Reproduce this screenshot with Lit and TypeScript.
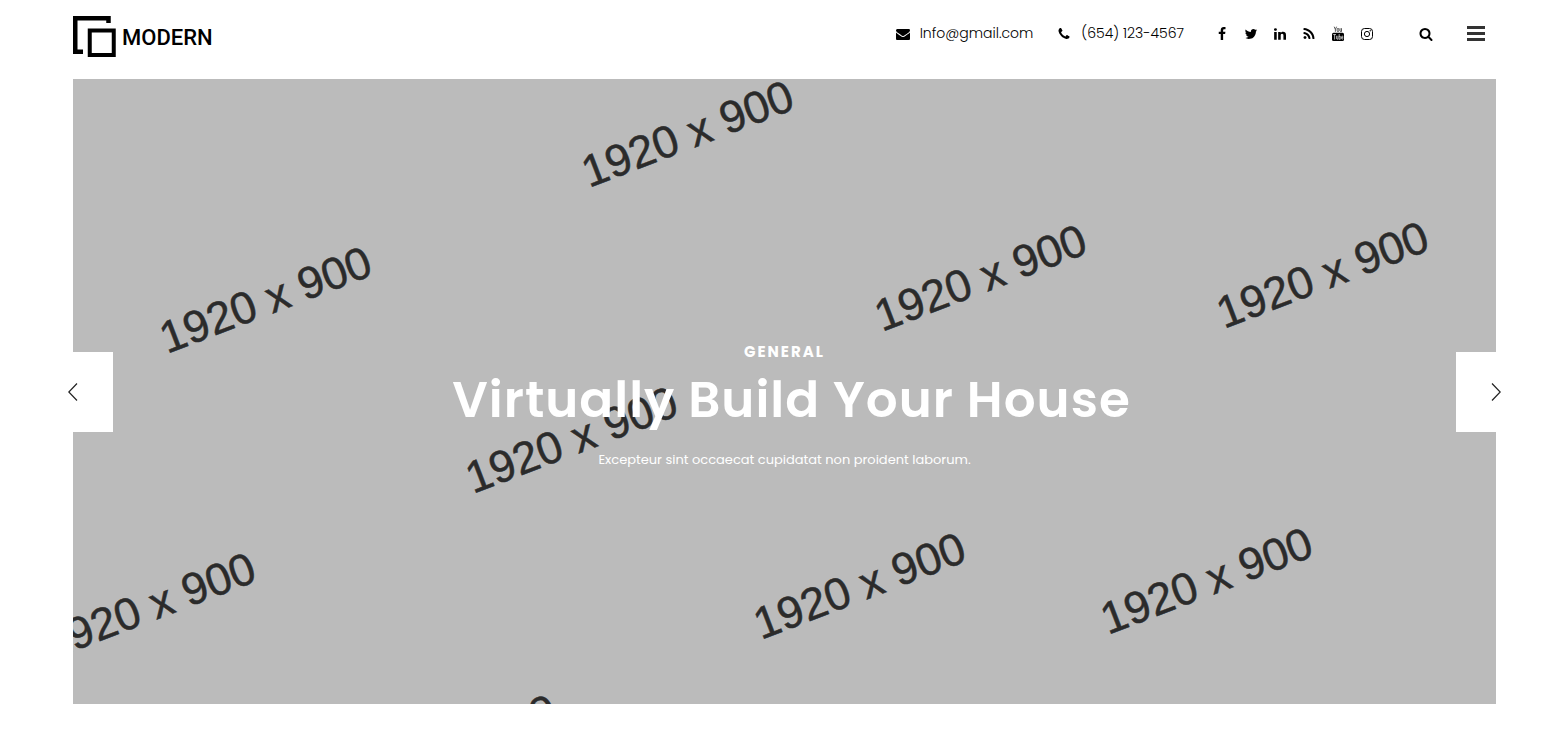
import { LitElement, html, css, svg } from "lit";
import { customElement } from "lit/decorators.js";

const ICONS = {
  envelope:
    "M1792 710v794q0 66-47 113t-113 47h-1472q-66 0-113-47t-47-113v-794q44 49 101 87 362 246 497 345 57 42 92.5 65.5t94.5 48 110 24.5h2q51 0 110-24.5t94.5-48 92.5-65.5q170-123 498-345 57-39 100-87zm0-294q0 79-49 151t-122 123q-376 261-468 325-10 7-42.5 31t-54 38.5-52 32.5-57.5 27-50 9h-2q-23 0-50-9t-57.5-27-52-32.5-54-38.5-42.5-31q-91-64-262-182.5t-205-142.5q-62-42-117-115.5t-55-136.5q0-78 41.5-130t118.5-52h1472q65 0 112.5 47t47.5 113z",
  phone:
    "M1600 1240q0 27-10 70.5t-21 68.5q-21 50-122 106-94 51-186 51-27 0-53-3.5t-57.5-12.5-47-14.5-55.5-20.5-49-18q-98-35-175-83-127-79-264-216t-216-264q-48-77-83-175-3-9-18-49t-20.5-55.5-14.5-47-12.5-57.5-3.5-53q0-92 51-186 56-101 106-122 25-11 68.5-21t70.5-10q14 0 21 3 18 6 53 76 11 19 30 54t35 63.5 31 53.5q3 4 17.5 25t21.5 35.5 7 28.5q0 20-28.5 50t-62 55-62 53-28.5 46q0 9 5 22.5t8.5 20.5 14 24 11.5 19q76 137 174 235t235 174q2 1 19 11.5t24 14 20.5 8.5 22.5 5q18 0 46-28.5t53-62 55-62 50-28.5q14 0 28.5 7t35.5 21.5 25 17.5q25 15 53.5 31t63.5 35 54 30q70 35 76 53 3 7 3 21z",
  facebook:
    "M1343 12v264h-157q-86 0-116 36t-30 108v189h293l-39 296h-254v759h-306v-759h-255v-296h255v-218q0-186 104-288.5t277-102.5q147 0 228 12z",
  twitter:
    "M1684 408q-67 98-162 167 1 14 1 42 0 130-38 259.5t-115.5 248.5-184.5 210.5-258 146-323 54.5q-271 0-496-145 35 4 78 4 225 0 401-138-105-2-188-64.5t-114-159.5q33 5 61 5 43 0 85-11-112-23-185.5-111.5t-73.5-205.5v-4q68 38 146 41-66-44-105-115t-39-154q0-88 44-163 121 149 294.5 238.5t371.5 99.5q-8-38-8-74 0-134 94.5-228.5t228.5-94.5q140 0 236 102 109-21 205-78-37 115-142 178 93-10 186-50z",
  linkedin:
    "M477 625v991h-330v-991h330zm21-306q1 73-50.5 122t-135.5 49h-2q-82 0-132-49t-50-122q0-74 51.5-122.5t134.5-48.5 133 48.5 51 122.5zm1166 729v568h-329v-530q0-105-40.5-164.5t-126.5-59.5q-63 0-105.5 34.5t-63.5 85.5q-11 30-11 81v553h-329q2-399 2-647t-1-296l-1-48h329v144h-2q20-32 41-56t56.5-52 87-43.5 114.5-15.5q171 0 275 113.5t104 332.5z",
  rss:
    "M576 1344q0 80-56 136t-136 56-136-56-56-136 56-136 136-56 136 56 56 136zm512 123q2 28-17 48-18 21-47 21h-135q-25 0-43-16.5t-20-41.5q-22-229-184.5-391.5t-391.5-184.5q-25-2-41.5-20t-16.5-43v-135q0-29 21-47 17-17 43-17h5q160 13 306 80.5t259 181.5q114 113 181.5 259t80.5 306zm512 2q2 27-18 47-18 20-46 20h-143q-26 0-44.5-17.5t-19.5-42.5q-12-215-101-408.5t-231.5-336-336-231.5-408.5-102q-25-1-42.5-19.5t-17.5-43.5v-143q0-28 20-46 18-18 44-18h3q262 13 501.5 120t425.5 294q187 186 294 425.5t120 501.5z",
  search:
    "M1216 832q0-185-131.5-316.5t-316.5-131.5-316.5 131.5-131.5 316.5 131.5 316.5 316.5 131.5 316.5-131.5 131.5-316.5zm512 832q0 52-38 90t-90 38q-54 0-90-38l-343-342q-179 124-399 124-143 0-273.5-55.5t-225-150-150-225-55.5-273.5 55.5-273.5 150-225 225-150 273.5-55.5 273.5 55.5 225 150 150 225 55.5 273.5q0 220-124 399l343 343q37 37 37 90z",
};

const icon = (name: keyof typeof ICONS) => html`
  <svg class="icon" viewBox="0 0 1792 1792" aria-hidden="true">
    <path d=${ICONS[name]}></path>
  </svg>
`;

const youtubeIcon = html`
  <svg class="icon" viewBox="0 0 14 14" aria-hidden="true">
    <path
      d="M3.2 -0.3l1.2 2.8v2.3M5.6 -0.3l-1.2 2.8M6.2 2.2q0-.8.8-.8t.8.8v1.6q0 .8-.8.8t-.8-.8zM9 1.2v2.9q.2.8 1.5 0M10.5 1.2v3.5"
      fill="none" stroke="#333" stroke-width="0.8"></path>
    <rect x="1" y="5.8" width="12" height="8.2" rx="1.5"></rect>
    <path
      d="M2.2 7.5h2.8M3.6 7.5v5M5.6 8.8v3q.3.9 1.4 0M7 8.8v3.7M8.2 7v5.3q1.5.3 1.5-.8v-1.4q0-1.1-1.5-.7M11.9 11.3q0 1-.6 1t-.6-1v-1.4q0-.9.6-.9t.6.9v.8h-1.2"
      fill="none" stroke="#eee" stroke-width="0.7"></path>
  </svg>
`;

const instagramIcon = html`
  <svg class="icon" viewBox="0 0 14 14" aria-hidden="true">
    <rect x="1.5" y="1.5" width="11" height="11" rx="3" fill="none" stroke="#000" stroke-width="1"></rect>
    <circle cx="7" cy="7" r="2.6" fill="none" stroke="#000" stroke-width="1"></circle>
    <circle cx="10.2" cy="3.8" r="0.7"></circle>
  </svg>
`;

const SOCIALS = [
  { label: "Facebook", art: icon("facebook") },
  { label: "Twitter", art: icon("twitter") },
  { label: "LinkedIn", art: icon("linkedin") },
  { label: "RSS", art: icon("rss") },
  { label: "YouTube", art: youtubeIcon },
  { label: "Instagram", art: instagramIcon },
];

// Baseline start of each repeated size label on the slide artwork.
const MARKS = [
  [516, 109],
  [94, 275],
  [809, 253],
  [1151, 250],
  [400, 415],
  [-22, 581],
  [688, 561],
  [1035, 556],
  [279, 723],
];

@customElement("app-root")
export class AppRoot extends LitElement {
  static styles = css`
    :host {
      display: block;
      background: #fff;
      color: #111;
      font-family: Poppins, Inter, "Open Sans", sans-serif;
    }
    * {
      box-sizing: border-box;
    }
    .page {
      display: flex;
      flex-direction: column;
      min-height: 100vh;
      padding: 0 69px 50px 73px;
      overflow: hidden;
    }
    .header {
      display: flex;
      align-items: flex-start;
      justify-content: space-between;
      height: 79px;
      padding: 16px 11px 0 0;
    }
    a {
      color: inherit;
      text-decoration: none;
    }
    button {
      display: flex;
      align-items: center;
      justify-content: center;
      padding: 0;
      border: 0;
      background: none;
      cursor: pointer;
    }
    .logo {
      display: flex;
      align-items: flex-start;
      gap: 6px;
      color: #000;
      font: 500 22px/44px Roboto, sans-serif;
    }
    .logo-mark {
      display: block;
      width: 43px;
      height: 42px;
    }
    .tools {
      display: flex;
      align-items: center;
      height: 35px;
    }
    .contact {
      display: flex;
      align-items: center;
      gap: 10px;
      margin-right: 24px;
      color: #000;
      font-size: 14px;
      font-weight: 300;
      line-height: 24px;
    }
    .contact span {
      padding-bottom: 2px;
    }
    .phone {
      margin-right: 31px;
    }
    .icon {
      display: block;
      width: 14px;
      height: 14px;
      fill: #000;
      overflow: visible;
    }
    .socials {
      display: flex;
      gap: 15px;
      margin: 0 45px 0 0;
      padding: 0;
      list-style: none;
    }
    .search {
      margin-right: 34px;
    }
    .bars {
      display: block;
      width: 18px;
      height: 15px;
    }
    .hero {
      position: relative;
      display: flex;
      flex: 1;
      min-height: 400px;
      background: #bbb;
    }
    .art {
      position: absolute;
      inset: 0;
      width: 100%;
      height: 100%;
      fill: #2b2b2b;
      stroke: #2b2b2b;
      stroke-width: 0.5;
      font: 45px "Liberation Sans", Arial, sans-serif;
    }
    .caption {
      position: relative;
      flex: 1;
      display: flex;
      flex-direction: column;
      align-items: center;
      justify-content: center;
      padding-top: 28px;
      color: #fff;
      text-align: center;
    }
    .category {
      margin: 0;
      font-size: 15px;
      font-weight: 700;
      line-height: 20px;
      letter-spacing: 2px;
    }
    .title {
      margin: 8px 0 10px;
      padding-left: 14px;
      font-size: 50px;
      font-weight: 600;
      line-height: 60px;
      letter-spacing: 1px;
    }
    .text {
      margin: 10px 0 0;
      font-size: 13px;
      font-weight: 400;
      line-height: 20px;
    }
    .arrow {
      position: absolute;
      top: 50%;
      width: 80px;
      height: 80px;
      margin-top: -40px;
      background: #fff;
    }
    .prev {
      left: -40px;
    }
    .next {
      right: -40px;
    }
    .chevron {
      width: 10px;
      height: 18px;
      fill: none;
      stroke: #222;
      stroke-width: 1.2;
    }
  `;

  render() {
    return html`
      <div class="page">
        <header class="header">
          <a class="logo" href="#">
            <svg class="logo-mark" viewBox="0 0 43 42" aria-hidden="true">
              <path
                d="M2.25 36V2.25H35.5V7M0 35.75H10"
                fill="none" stroke="#000" stroke-width="4.5"></path>
              <rect x="16.75" y="14.5" width="24" height="24.5" fill="none" stroke="#000" stroke-width="4"></rect>
            </svg>
            <span>MODERN</span>
          </a>
          <div class="tools">
            <a class="contact" href="mailto:Info@gmail.com">${icon("envelope")}<span>Info@gmail.com</span></a>
            <a class="contact phone" href="tel:6541234567">${icon("phone")}<span>(654) 123-4567</span></a>
            <ul class="socials">
              ${SOCIALS.map((s) => html`<li><a href="#" aria-label=${s.label}>${s.art}</a></li>`)}
            </ul>
            <button class="search" aria-label="Search">${icon("search")}</button>
            <button aria-label="Menu">
              <svg class="bars" viewBox="0 0 18 15" fill="#333" aria-hidden="true">
                <path d="M0 0h18v3H0zM0 6h18v3H0zM0 12h18v3H0z"></path>
              </svg>
            </button>
          </div>
        </header>
        <section class="hero">
          <svg class="art" viewBox="0 0 1423 625" preserveAspectRatio="xMidYMid slice" aria-hidden="true">
            ${MARKS.map(([x, y]) => svg`<text transform="translate(${x} ${y}) rotate(-21)">1920 x 900</text>`)}
          </svg>
          <div class="caption">
            <p class="category">GENERAL</p>
            <h1 class="title">Virtually Build Your House</h1>
            <p class="text">Excepteur sint occaecat cupidatat non proident laborum.</p>
          </div>
          <button class="arrow prev" aria-label="Previous slide">
            <svg class="chevron" viewBox="0 0 10 18"><path d="M9 0.5L0.8 9L9 17.5"></path></svg>
          </button>
          <button class="arrow next" aria-label="Next slide">
            <svg class="chevron" viewBox="0 0 10 18"><path d="M1 0.5L9.2 9L1 17.5"></path></svg>
          </button>
        </section>
      </div>
    `;
  }
}
